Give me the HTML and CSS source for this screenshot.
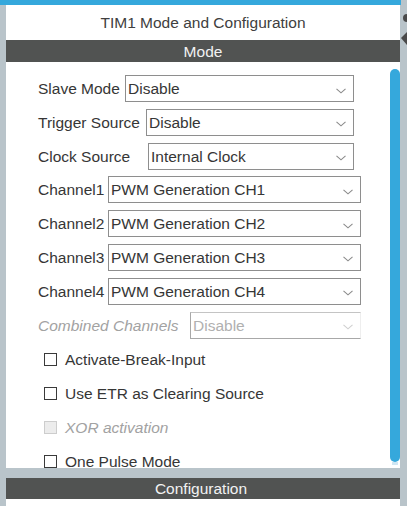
FILE: index.html
```html
<!DOCTYPE html>
<html>
<head>
<meta charset="utf-8">
<link rel="stylesheet" href="styles.css">
</head>
<body>
<div class="topbar"></div>
<div class="frame">
  <div class="strip-left"></div>
  <div class="panel">
    <div class="title">TIM1 Mode and Configuration</div>
    <div class="section-head">Mode</div>
    <div class="body">
      <div class="content">
        <div class="group selects">
          <div class="row narrow">
            <span class="label w-slave">Slave Mode</span>
            <div class="select"><span>Disable</span><svg class="chev" width="10" height="6" viewBox="0 0 10 6"><polyline points="0.5,0.8 5,4.8 9.5,0.8" fill="none" stroke="#8a8a8a" stroke-width="1.1"/></svg></div>
          </div>
          <div class="row narrow">
            <span class="label w-trigger">Trigger Source</span>
            <div class="select"><span>Disable</span><svg class="chev" width="10" height="6" viewBox="0 0 10 6"><polyline points="0.5,0.8 5,4.8 9.5,0.8" fill="none" stroke="#8a8a8a" stroke-width="1.1"/></svg></div>
          </div>
          <div class="row narrow">
            <span class="label w-clock">Clock Source</span>
            <div class="select"><span>Internal Clock</span><svg class="chev" width="10" height="6" viewBox="0 0 10 6"><polyline points="0.5,0.8 5,4.8 9.5,0.8" fill="none" stroke="#8a8a8a" stroke-width="1.1"/></svg></div>
          </div>
          <div class="row wide">
            <span class="label w-channel">Channel1</span>
            <div class="select"><span>PWM Generation CH1</span><svg class="chev" width="10" height="6" viewBox="0 0 10 6"><polyline points="0.5,0.8 5,4.8 9.5,0.8" fill="none" stroke="#8a8a8a" stroke-width="1.1"/></svg></div>
          </div>
          <div class="row wide">
            <span class="label w-channel">Channel2</span>
            <div class="select"><span>PWM Generation CH2</span><svg class="chev" width="10" height="6" viewBox="0 0 10 6"><polyline points="0.5,0.8 5,4.8 9.5,0.8" fill="none" stroke="#8a8a8a" stroke-width="1.1"/></svg></div>
          </div>
          <div class="row wide">
            <span class="label w-channel">Channel3</span>
            <div class="select"><span>PWM Generation CH3</span><svg class="chev" width="10" height="6" viewBox="0 0 10 6"><polyline points="0.5,0.8 5,4.8 9.5,0.8" fill="none" stroke="#8a8a8a" stroke-width="1.1"/></svg></div>
          </div>
          <div class="row wide">
            <span class="label w-channel">Channel4</span>
            <div class="select"><span>PWM Generation CH4</span><svg class="chev" width="10" height="6" viewBox="0 0 10 6"><polyline points="0.5,0.8 5,4.8 9.5,0.8" fill="none" stroke="#8a8a8a" stroke-width="1.1"/></svg></div>
          </div>
          <div class="row wide">
            <span class="label w-combined disabled-label">Combined Channels</span>
            <div class="select disabled"><span>Disable</span><svg class="chev" width="10" height="6" viewBox="0 0 10 6"><polyline points="0.5,0.8 5,4.8 9.5,0.8" fill="none" stroke="#cfcfcf" stroke-width="1.1"/></svg></div>
          </div>
        </div>
        <div class="group checks">
          <div class="check-row"><span class="box"></span><span class="check-text">Activate-Break-Input</span></div>
          <div class="check-row"><span class="box"></span><span class="check-text">Use ETR as Clearing Source</span></div>
          <div class="check-row"><span class="box box-disabled"></span><span class="check-text disabled-label">XOR activation</span></div>
          <div class="check-row"><span class="box"></span><span class="check-text">One Pulse Mode</span></div>
        </div>
      </div>
      <div class="scroll"><div class="thumb"></div><div class="thumb-tip"></div></div>
    </div>
    <div class="band"></div>
    <div class="section-head config">Configuration</div>
    <div class="bottom"></div>
  </div>
  <div class="strip-right">
    <svg width="7" height="40" viewBox="0 0 7 40"><circle cx="7" cy="13" r="4" fill="#4a4a4a"/><polygon points="1,33 7,27 7,40" fill="#4a4a4a"/></svg>
  </div>
</div>
</body>
</html>
```

FILE: styles.css
```css
html, body {
  margin: 0;
  padding: 0;
}
body {
  width: 407px;
  height: 506px;
  overflow: hidden;
  background: #b9c4ca;
  font-family: "Liberation Sans", Arial, sans-serif;
  font-size: 15.5px;
  color: #363636;
}
.topbar {
  width: 401px;
  height: 5px;
  background: #35a8dc;
}
.frame {
  display: flex;
  height: 501px;
}
.strip-left {
  width: 6px;
  background: #b9c4ca;
}
.panel {
  width: 394px;
  display: flex;
  flex-direction: column;
  background: #fff;
}
.strip-right {
  width: 7px;
  background: #b9c4ca;
}
.strip-right svg {
  display: block;
}
.title {
  height: 35px;
  line-height: 36px;
  text-align: center;
  color: #404040;
}
.section-head {
  height: 22px;
  line-height: 23px;
  background: #515352;
  color: #f2f2f2;
  text-align: center;
}
.section-head.config {
  height: 21px;
  line-height: 22px;
  padding-right: 4px;
}
.body {
  height: 406px;
  display: flex;
}
.content {
  flex: 1;
  padding: 13px 0 0 32px;
  display: flex;
  flex-direction: column;
  gap: 7px;
}
.group {
  display: flex;
  flex-direction: column;
}
.group.selects { gap: 6.8px; }
.group.checks { gap: 7.3px; }
.row {
  display: flex;
  align-items: center;
  height: 27px;
}
.row.narrow { width: 316px; }
.row.wide { width: 323px; }
.label {
  flex: none;
  white-space: nowrap;
  padding-top: 1px;
}
.w-slave { width: 87px; }
.w-trigger { width: 108px; }
.w-clock { width: 110px; }
.w-channel { width: 70px; }
.w-combined { width: 152px; }
.disabled-label {
  font-style: italic;
  color: #a2a2a2;
}
.select {
  flex: 1;
  height: 27px;
  box-sizing: border-box;
  border: 1px solid #8e8e8e;
  display: flex;
  align-items: center;
  justify-content: space-between;
  padding: 1px 7px 0 2px;
  color: #363636;
  white-space: nowrap;
}
.select.disabled {
  border-color: #c4c4c4 #eeeeee #a8a8a8 #a8a8a8;
  color: #b0b0b0;
}
.chev {
  display: block;
  margin-top: 3px;
}
.check-row {
  display: flex;
  align-items: center;
  height: 27px;
  padding-left: 6px;
}
.check-text { padding-top: 1px; }
.box {
  width: 13px;
  height: 13px;
  box-sizing: border-box;
  border: 1px solid #3a3a3a;
  background: #fff;
  margin-right: 8px;
  flex: none;
}
.box-disabled {
  border-color: #cdcdcd;
  background: #ececec;
}
.scroll {
  width: 10px;
  padding-top: 7px;
}
.thumb {
  height: 393px;
  background: #35a8dc;
  border-radius: 5px;
}
.thumb-tip {
  height: 3px;
  width: 6px;
  margin: 0 auto;
  background: #cfe6f3;
}
.band {
  height: 10px;
  background: #b9c4ca;
}
.bottom {
  flex: 1;
  background: #fff;
}
```
